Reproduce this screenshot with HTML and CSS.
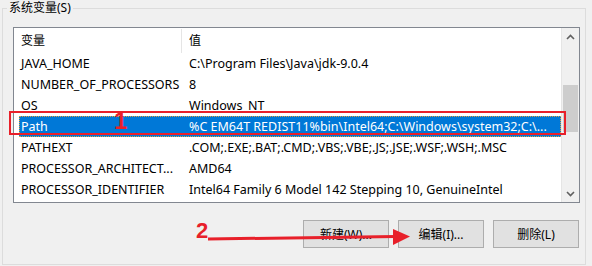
FILE: index.html
```html
<html>
    <head>
        <title>系统变量</title>
        <meta charset="utf-8">
        <link rel="stylesheet" href="styles.css">
    </head>
    <body>
        <fieldset class="group">
            <legend>系统变量(S)</legend>
            <div class="list">
                <div class="rows">
                    <div class="head">
                        <span>变量</span>
                        <span>值</span>
                    </div>
                    <div class="row"><span>JAVA_HOME</span><span>C:\Program Files\Java\jdk-9.0.4</span></div>
                    <div class="row"><span>NUMBER_OF_PROCESSORS</span><span>8</span></div>
                    <div class="row"><span>OS</span><span>Windows_NT</span></div>
                    <div class="row selected"><span>Path</span><span>%C EM64T REDIST11%bin\Intel64;C:\Windows\system32;C:\...</span></div>
                    <div class="row"><span>PATHEXT</span><span>.COM;.EXE;.BAT;.CMD;.VBS;.VBE;.JS;.JSE;.WSF;.WSH;.MSC</span></div>
                    <div class="row"><span>PROCESSOR_ARCHITECT...</span><span>AMD64</span></div>
                    <div class="row"><span>PROCESSOR_IDENTIFIER</span><span>Intel64 Family 6 Model 142 Stepping 10, GenuineIntel</span></div>
                </div>
                <div class="scrollbar">
                    <div class="arrow">
                        <svg width="9" height="6"><polyline points="1,5 4.5,1.5 8,5" fill="none" stroke="#606060" stroke-width="1.6"/></svg>
                    </div>
                    <div class="track">
                        <div class="thumb"></div>
                    </div>
                    <div class="arrow">
                        <svg width="9" height="6"><polyline points="1,1 4.5,4.5 8,1" fill="none" stroke="#606060" stroke-width="1.6"/></svg>
                    </div>
                </div>
            </div>
            <div class="buttons">
                <button>新建(W)...</button>
                <button>编辑(I)...</button>
                <button>删除(L)</button>
            </div>
        </fieldset>

        <!-- annotations drawn over the dialog -->
        <div class="mark-box"></div>
        <span class="mark-num one">1</span>
        <span class="mark-num two">2</span>
        <svg class="mark-arrow" width="592" height="266">
            <line x1="208" y1="239" x2="396" y2="236.5" stroke="#e8202a" stroke-width="3"/>
            <polygon points="393,229 410,236.5 393,245" fill="#e8202a"/>
        </svg>
    </body>
</html>
```

FILE: styles.css
```css
body {
    margin: 0;
    width: 592px;
    height: 266px;
    background-color: #f0f0f0;
    font-family: "Noto Sans", "Noto Sans CJK SC", sans-serif;
    font-size: 12.5px;
    color: #000;
    position: relative;
    overflow: hidden;
}

.group {
    margin: 0 6px 0 2px;
    padding: 0 5px 16px 10px;
    border: 1px solid #dcdcdc;
}

.group legend {
    margin-left: -6px;
    padding: 0 2px;
    line-height: 16px;
    font-size: 12px;
}

.list {
    margin-top: 11px;
    height: 174px;
    border: 1px solid #828790;
    background-color: #fff;
    display: flex;
}

.rows {
    flex: 1;
    min-width: 0;
    border-right: 1px solid #e5e5e5;
}

.head,
.row {
    display: grid;
    white-space: nowrap;
}

.head {
    grid-template-columns: 168px 1fr;
    height: 25px;
    line-height: 25px;
    font-size: 12px;
}

.head span {
    padding-left: 7px;
}

.head span:first-child {
    border-right: 1px solid #e5e5e5;
    margin-top: 1px;
    line-height: 23px;
}

.row {
    grid-template-columns: 163px 1fr;
    height: 21px;
    line-height: 21px;
    margin-left: 5px;
}

.row span {
    overflow: hidden;
    padding-left: 2px;
}

.row span:last-child {
    padding-left: 7px;
}

.selected {
    background-color: #0078d7;
    color: #fff;
    height: 19px;
    line-height: 19px;
    border: 1px dotted #e0a040;
    grid-template-columns: 162px 1fr;
}

.selected span:first-child {
    padding-left: 1px;
}

.scrollbar {
    width: 17px;
    background-color: #f0f0f0;
    display: flex;
    flex-direction: column;
}

.arrow {
    height: 17px;
    display: flex;
    align-items: center;
    justify-content: center;
}

.track {
    flex: 1;
    padding-top: 40px;
}

.thumb {
    height: 47px;
    margin: 0 1px;
    background-color: #cdcdcd;
}

.buttons {
    margin-top: 17px;
    display: flex;
    justify-content: flex-end;
    gap: 9px;
    padding-right: 1px;
}

.buttons button {
    width: 86px;
    height: 28px;
    background-color: #e1e1e1;
    border: 1px solid #adadad;
    font-family: "Noto Sans", "Noto Sans CJK SC", sans-serif;
    font-size: 12px;
    color: #000;
    padding: 0;
}

.mark-box {
    position: absolute;
    left: 9px;
    top: 111px;
    width: 553px;
    height: 20px;
    border: 2px solid #e8202a;
}

.mark-num {
    position: absolute;
    font-family: "Liberation Sans", Arial, sans-serif;
    font-weight: bold;
    color: #e8202a;
    line-height: 1;
}

.one {
    left: 114px;
    top: 109px;
    font-size: 24px;
}

.two {
    left: 196px;
    top: 220px;
    font-size: 22px;
}

.mark-arrow {
    position: absolute;
    left: 0;
    top: 0;
}
```
